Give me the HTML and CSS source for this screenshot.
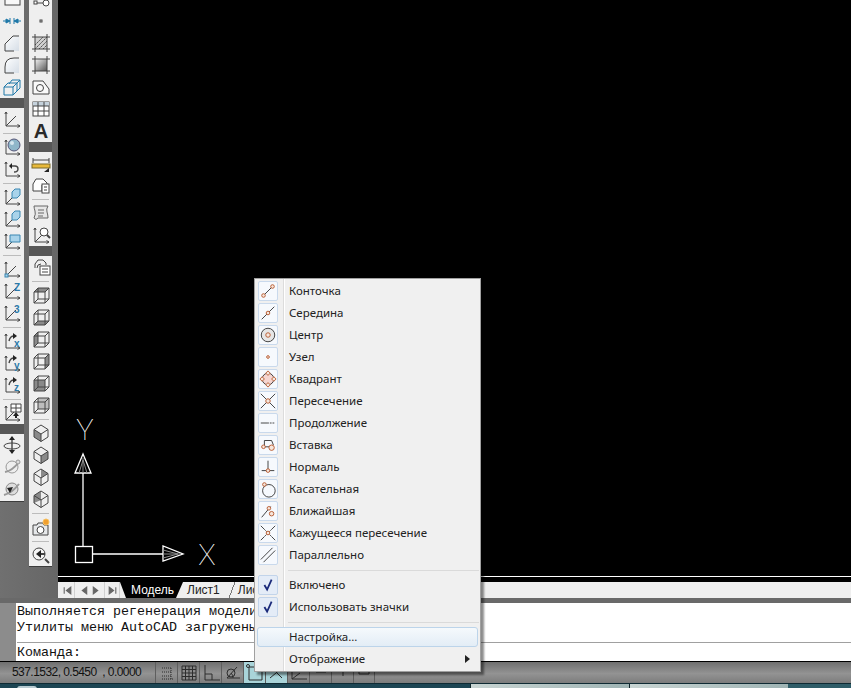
FILE: index.html
```html
<!DOCTYPE html>
<html lang="ru">

<head>
    <meta charset="UTF-8">
    <title>AutoCAD</title>
    <link rel="stylesheet" href="styles.css">
</head>

<body>
    <!-- shared icon parts -->
    <svg class="defs" width="0" height="0">
        <defs>
            <linearGradient id="grad" x1="0" y1="0" x2="1" y2="1">
                <stop offset="0" stop-color="#f4f4f4"/>
                <stop offset="1" stop-color="#555"/>
            </linearGradient>
            <linearGradient id="soft" x1="0" y1="0" x2="1" y2="1">
                <stop offset="0" stop-color="#fff"/>
                <stop offset="1" stop-color="#d5dde6"/>
            </linearGradient>
            <symbol id="ucs" viewBox="0 0 20 20">
                <path d="M4 3V17H18M4 17L14 7M15.500 15.500L18 17L15.500 18.500M2.800 5L4 3L5.200 5"/>
            </symbol>
            <symbol id="axes" viewBox="0 0 20 20">
                <path d="M4 3V17H18M15.500 15.500L18 17L15.500 18.500M2.800 5L4 3L5.200 5"/>
            </symbol>
            <symbol id="cube" viewBox="0 0 20 20">
                <path d="M3 7H14V18H3ZM3 7L7 3H18V14L14 18M14 7L18 3M7 3V14H18M7 14L3 18"/>
            </symbol>
            <symbol id="iso" viewBox="0 0 20 20">
                <path d="M10 2L17 6.500V14L10 18.500L3 14V6.500ZM3 6.500L10 11L17 6.500M10 11V18.500"/>
            </symbol>
        </defs>
    </svg>

    <div class="workspace">
        <div class="toolbars">
            <div class="tb tb-left">
                <div class="tool top"><svg class="ico" viewBox="0 0 20 20"><rect x="3" y="5" width="15" height="10" fill="#f8f8f8"/></svg></div>
                <div class="tool"><svg class="ico blue" viewBox="0 0 20 20"><path d="M1 10H7M13 10H19M8 7V13M12 7V13"/><path class="solid-blue" d="M4 8L8 10L4 12ZM16 8L12 10L16 12Z"/></svg></div>
                <div class="tool"><svg class="ico" viewBox="0 0 20 20"><path fill="url(#soft)" d="M17 3H11L3 11V18H17Z" stroke="none"/><path d="M17 3H11L3 11V18H12"/></svg></div>
                <div class="tool"><svg class="ico" viewBox="0 0 20 20"><path fill="url(#soft)" d="M17 3H12Q3 3 3 12V18H17Z" stroke="none"/><path d="M17 3H12Q3 3 3 12V18H12"/></svg></div>
                <div class="tool"><svg class="ico blue" viewBox="0 0 20 20"><path d="M2 10H11V18H2ZM2 10L6 6H15V14L11 18M11 10L15 6M7 7L10 3H18V11L15 14M15 6L18 3"/></svg></div>
                <div class="grip"></div>
                <div class="tool"><svg class="ico"><use href="#ucs"/></svg></div>
                <div class="sep"></div>
                <div class="tool"><svg class="ico" viewBox="0 0 20 20"><use href="#axes" width="20" height="20"/><circle cx="12" cy="8" r="6" fill="#8fb6c9" stroke="#557"/><circle cx="10" cy="6" r="2" fill="#d6e6ee" stroke="none"/></svg></div>
                <div class="tool"><svg class="ico" viewBox="0 0 20 20"><use href="#axes" width="20" height="20"/><path class="mid" d="M9 7H13Q16 7 16 10T12 13"/><path class="solid" d="M10 4V10L7 7Z"/></svg></div>
                <div class="sep"></div>
                <div class="tool"><svg class="ico" viewBox="0 0 20 20"><use href="#ucs" width="20" height="20"/><path class="face" d="M10 5L13 2H18V8L15 11H10Z"/></svg></div>
                <div class="tool"><svg class="ico" viewBox="0 0 20 20"><use href="#ucs" width="20" height="20"/><path class="face" d="M10 5L13 2H18V8L15 11H10Z"/></svg></div>
                <div class="tool"><svg class="ico" viewBox="0 0 20 20"><use href="#ucs" width="20" height="20"/><path class="face" d="M8 4H18V11H8Z"/></svg></div>
                <div class="sep"></div>
                <div class="tool"><svg class="ico" viewBox="0 0 20 20"><use href="#ucs" width="20" height="20"/><rect x="3" y="15" width="3" height="3" class="face"/></svg></div>
                <div class="tool"><svg class="ico" viewBox="0 0 20 20"><use href="#ucs" width="20" height="20"/><text x="12" y="10" class="letter">Z</text></svg></div>
                <div class="tool"><svg class="ico" viewBox="0 0 20 20"><use href="#ucs" width="20" height="20"/><text x="12" y="10" class="letter">3</text></svg></div>
                <div class="sep"></div>
                <div class="tool"><svg class="ico" viewBox="0 0 20 20"><use href="#axes" width="20" height="20"/><path class="mid" d="M7 10Q8 5 12 5"/><path class="solid" d="M11 2L15 5L11 8Z"/><text x="12" y="16" class="letter">x</text></svg></div>
                <div class="tool"><svg class="ico" viewBox="0 0 20 20"><use href="#axes" width="20" height="20"/><path class="mid" d="M7 10Q8 5 12 5"/><path class="solid" d="M11 2L15 5L11 8Z"/><text x="12" y="16" class="letter">y</text></svg></div>
                <div class="tool"><svg class="ico" viewBox="0 0 20 20"><use href="#axes" width="20" height="20"/><path class="mid" d="M7 10Q8 5 12 5"/><path class="solid" d="M11 2L15 5L11 8Z"/><text x="12" y="16" class="letter">z</text></svg></div>
                <div class="sep"></div>
                <div class="tool"><svg class="ico" viewBox="0 0 20 20"><use href="#ucs" width="20" height="20"/><path fill="#fff" d="M9 1H19V9H9ZM14 1V9M9 5H19"/><path class="solid" d="M11 13L14 9L17 13H15V15H13V13Z"/></svg></div>
                <div class="grip"></div>
                <div class="tool"><svg class="ico" viewBox="0 0 20 20"><path class="mid" d="M10 2V18"/><path class="solid" d="M10 1L13 5H7ZM10 19L7 15H13Z"/><ellipse cx="10" cy="11" rx="8" ry="3"/></svg></div>
                <div class="tool"><svg class="ico" viewBox="0 0 20 20"><circle cx="10" cy="10" r="6" fill="#eee" stroke="#999"/><path class="ring" d="M3 15Q10 14 17 5"/><circle cx="16" cy="5" r="2" fill="#ddd" stroke="#999"/></svg></div>
                <div class="tool"><svg class="ico" viewBox="0 0 20 20"><circle cx="10" cy="10" r="6" fill="#ddd" stroke="#888"/><path class="ring" d="M2 16Q10 14 17 5"/><path class="solid" d="M5 9L11 8L8 14Z"/></svg></div>
            </div>

            <div class="tb tb-right">
                <div class="tool top"><svg class="ico" viewBox="0 0 20 20"><rect x="3" y="11" width="3" height="3" fill="#fff"/><path d="M6 13H12"/><circle cx="15" cy="13" r="3" fill="#fff"/></svg></div>
                <div class="tool"><svg class="ico" viewBox="0 0 20 20"><rect x="9" y="9" width="2" height="2"/></svg></div>
                <div class="tool"><svg class="ico" viewBox="0 0 20 20"><rect x="4" y="4" width="12" height="12" fill="#cfcfcf" stroke="none"/><path class="dash" d="M4 12L12 4M4 16L16 4M8 16L16 8M12 16L16 12"/><path d="M1 4H19M1 16H19M4 1V19M16 1V19"/></svg></div>
                <div class="tool"><svg class="ico" viewBox="0 0 20 20"><rect x="4" y="4" width="12" height="12" fill="url(#grad)" stroke="none"/><path d="M1 4H19M1 16H19M4 1V19M16 1V19"/></svg></div>
                <div class="tool"><svg class="ico" viewBox="0 0 20 20"><path fill="#fafafa" d="M2 4H12L18 12V17H2Z"/><circle cx="9" cy="11" r="3.500"/></svg></div>
                <div class="tool"><svg class="ico" viewBox="0 0 20 20"><rect x="2" y="3" width="16" height="14" fill="#fff"/><rect x="2" y="3" width="16" height="4" fill="#c5d2dc" stroke="none"/><path d="M2 7H18M2 12H18M7 3V17M13 3V17"/></svg></div>
                <div class="tool"><svg class="ico" viewBox="0 0 20 20"><text x="10" y="17" class="big-a">A</text></svg></div>
                <div class="grip"></div>
                <div class="tool"><svg class="ico" viewBox="0 0 20 20"><path d="M2 5V10M18 5V10M2 7H18"/><rect x="1" y="11" width="18" height="4" fill="#e8b93a" stroke="#7a6a2a"/><path class="solid" d="M13 19L18 15V19Z"/></svg></div>
                <div class="tool"><svg class="ico" viewBox="0 0 20 20"><path fill="#fff" d="M2 9L5 4H12L16 8V10H11V16H2Z"/><rect x="11" y="9" width="7" height="9" fill="#fff"/><path d="M13 12H16M13 15H16"/></svg></div>
                <div class="sep"></div>
                <div class="tool"><svg class="ico gray" viewBox="0 0 20 20"><path fill="#e6e6e6" d="M3 3H17Q15 6 16 9T17 15H7Q5 18 3 15Q5 11 4 8T3 3Z"/><path d="M7 7H13M7 10H13M7 13H12"/></svg></div>
                <div class="tool"><svg class="ico" viewBox="0 0 20 20"><use href="#ucs" width="20" height="20"/><circle cx="13" cy="7" r="4" fill="#fff"/><path class="thick" d="M16 10L19 13"/></svg></div>
                <div class="grip"></div>
                <div class="tool"><svg class="ico" viewBox="0 0 20 20"><path d="M4 11V7L7 3H12L15 6V8"/><path d="M6 11Q6 7 10 7"/><rect x="9" y="9" width="10" height="9" fill="#fff"/><path d="M11 12H17M11 15H17"/></svg></div>
                <div class="sep"></div>
                <div class="tool"><svg class="ico" viewBox="0 0 20 20"><path class="fill-face" d="M3 7L7 3H18L14 7Z"/><use href="#cube" width="20" height="20"/></svg></div>
                <div class="tool"><svg class="ico" viewBox="0 0 20 20"><path class="fill-face" d="M3 18L7 14H18L14 18Z"/><use href="#cube" width="20" height="20"/></svg></div>
                <div class="tool"><svg class="ico" viewBox="0 0 20 20"><path class="fill-face" d="M3 7L7 3V14L3 18Z"/><use href="#cube" width="20" height="20"/></svg></div>
                <div class="tool"><svg class="ico" viewBox="0 0 20 20"><path class="fill-face" d="M14 7L18 3V14L14 18Z"/><use href="#cube" width="20" height="20"/></svg></div>
                <div class="tool"><svg class="ico" viewBox="0 0 20 20"><rect class="fill-face" x="3" y="7" width="11" height="11"/><use href="#cube" width="20" height="20"/></svg></div>
                <div class="tool"><svg class="ico" viewBox="0 0 20 20"><rect class="fill-back" x="7" y="3" width="11" height="11"/><use href="#cube" width="20" height="20"/></svg></div>
                <div class="sep"></div>
                <div class="tool"><svg class="ico" viewBox="0 0 20 20"><path class="fill-face" d="M3 6.500L10 11V18.500L3 14Z"/><use href="#iso" width="20" height="20"/></svg></div>
                <div class="tool"><svg class="ico" viewBox="0 0 20 20"><path class="fill-face" d="M17 6.500L10 11V18.500L17 14Z"/><use href="#iso" width="20" height="20"/></svg></div>
                <div class="tool"><svg class="ico" viewBox="0 0 20 20"><path class="fill-face" d="M17 6.500L10 2V11Z"/><use href="#iso" width="20" height="20"/></svg></div>
                <div class="tool"><svg class="ico" viewBox="0 0 20 20"><path class="fill-face" d="M3 6.500L10 2V11L3 14Z"/><use href="#iso" width="20" height="20"/></svg></div>
                <div class="sep"></div>
                <div class="tool"><svg class="ico" viewBox="0 0 20 20"><path fill="#e6e8ea" d="M2 8H6L7 6H12L13 8H17V18H2Z"/><circle cx="9.500" cy="13" r="3.500" fill="#fff"/><circle cx="15" cy="5" r="3" fill="#f0a030" stroke="#f7c060"/></svg></div>
                <div class="sep"></div>
                <div class="tool"><svg class="ico" viewBox="0 0 20 20"><circle cx="8" cy="9" r="6" fill="#f4f4f4"/><path class="thick" d="M14 14L18 18M7 9H14"/><path class="solid" d="M10 5V13L5 9Z"/></svg></div>
            </div>
        </div>

        <div class="drawing">
            <div class="canvas">
                <svg class="ucs-icon" width="170" height="175" viewBox="0 0 170 175">
                    <path d="M23 73V146M32 154H103"/>
                    <rect x="15.500" y="146.500" width="17" height="16"/>
                    <path d="M23 54L15 73H31Z"/>
                    <path class="inner" d="M23 58V73M19 73L23 60L27 73"/>
                    <path d="M103 146V161L123 154Z"/>
                    <path class="inner" d="M103 154H120M103 150L118 154L103 158"/>
                    <text x="25" y="40" class="axis">Y</text>
                    <text x="147" y="165" class="axis">X</text>
                </svg>
            </div>
            <div class="canvas-foot"></div>
            <div class="tabs">
                <div class="tab-nav">
                    <span class="nav"><svg viewBox="0 0 10 10"><path d="M2 2V8M8 2V8L4 5Z"/></svg></span>
                    <span class="nav nav-prev"><svg viewBox="0 0 10 10"><path d="M7 2V8L3 5Z"/></svg></span>
                    <span class="nav nav-next"><svg viewBox="0 0 10 10"><path d="M3 2V8L7 5Z"/></svg></span>
                    <span class="nav"><svg viewBox="0 0 10 10"><path d="M8 2V8M2 2V8L6 5Z"/></svg></span>
                </div>
                <span class="tab active">Модель</span>
                <span class="tab sheet">Лист1</span>
                <span class="tab last">Лист2</span>
            </div>
        </div>
    </div>

    <div class="divider"></div>

    <div class="command">
        <div class="command-grip"></div>
        <div class="command-body">
            <div class="history">
                <div>Выполняется регенерация модели.</div>
                <div>Утилиты меню AutoCAD загружены.</div>
            </div>
            <div class="prompt">Команда:</div>
        </div>
    </div>

    <div class="status">
        <div class="coords">537.1532, 0.5450  , 0.0000</div>
        <div class="toggles">
            <span class="toggle"><svg viewBox="0 0 20 20"><path class="dots" d="M5 5H14M5 9H14M5 13H14M14 5V16M5 16H16"/></svg></span>
            <span class="toggle"><svg viewBox="0 0 20 20"><path d="M3 3H17V17H3ZM3 6.500H17M3 10H17M3 13.500H17M6.500 3V17M10 3V17M13.500 3V17"/></svg></span>
            <span class="toggle"><svg viewBox="0 0 20 20"><path d="M4 2V17H19M4 11H11V17"/></svg></span>
            <span class="toggle"><svg viewBox="0 0 20 20"><path d="M4 15H17M4 15L14 4M10 15A6 6 0 0 0 8 10"/><circle cx="8" cy="10" r="4"/></svg></span>
            <span class="toggle on"><svg viewBox="0 0 20 20"><path d="M4 4H17V17H4Z"/><circle cx="3" cy="3" r="1.500"/></svg></span>
            <span class="toggle on"><svg viewBox="0 0 20 20"><path d="M3 15L15 5M5 5L15 15"/></svg></span>
            <span class="toggle"><svg viewBox="0 0 20 20"><path d="M3 6V16H18M3 16L11 10"/></svg></span>
            <span class="toggle"><svg viewBox="0 0 20 20"><path d="M5 5H15V9H5Z"/></svg></span>
            <span class="toggle"><svg viewBox="0 0 20 20"><path d="M10 2V13"/></svg></span>
            <span class="toggle"><svg viewBox="0 0 20 20"><path d="M5 3H15V11H5ZM8 7H12"/></svg></span>
        </div>
    </div>

    <div class="taskbar">
        <span class="orb"></span>
        <span class="task-btn first"></span>
        <span class="task-btn"></span>
    </div>

    <div class="menu">
        <div class="item"><span class="mark"><svg class="osnap" viewBox="0 0 20 20"><path d="M5 15L15 5"/><circle class="pt" cx="15" cy="5" r="2"/><circle class="pt" cx="5" cy="15" r="2"/></svg></span><span class="label">Конточка</span></div>
        <div class="item"><span class="mark"><svg class="osnap" viewBox="0 0 20 20"><path d="M3 17L17 3"/><circle class="pt" cx="10" cy="10" r="2"/></svg></span><span class="label">Середина</span></div>
        <div class="item"><span class="mark"><svg class="osnap" viewBox="0 0 20 20"><circle cx="10" cy="10" r="7.500" fill="#e6e6e6"/><circle class="pt" cx="10" cy="10" r="2.500"/></svg></span><span class="label">Центр</span></div>
        <div class="item"><span class="mark"><svg class="osnap" viewBox="0 0 20 20"><circle class="pt" cx="10" cy="10" r="1.500"/></svg></span><span class="label">Узел</span></div>
        <div class="item"><span class="mark"><svg class="osnap" viewBox="0 0 20 20"><circle cx="10" cy="10" r="6.500" fill="#f5d5d0"/><path class="pt" d="M10 1L12.500 3.500L10 6L7.500 3.500ZM10 14L12.500 16.500L10 19L7.500 16.500ZM3.500 7.500L6 10L3.500 12.500L1 10ZM16.500 7.500L19 10L16.500 12.500L14 10Z"/></svg></span><span class="label">Квадрант</span></div>
        <div class="item"><span class="mark"><svg class="osnap" viewBox="0 0 20 20"><path d="M2 2L18 18M18 2L2 18"/><circle class="pt" cx="10" cy="10" r="2.500"/></svg></span><span class="label">Пересечение</span></div>
        <div class="item"><span class="mark"><svg class="osnap" viewBox="0 0 20 20"><path d="M2 10H9"/><path class="dash" d="M9 10H18"/></svg></span><span class="label">Продолжение</span></div>
        <div class="item"><span class="mark"><svg class="osnap" viewBox="0 0 20 20"><path d="M6 11V5H14L16 10M3 12H12"/><circle class="pt" cx="5" cy="12" r="2"/><circle class="pt" cx="14" cy="13" r="3"/></svg></span><span class="label">Вставка</span></div>
        <div class="item"><span class="mark"><svg class="osnap" viewBox="0 0 20 20"><path d="M10 3V14M3 14H17"/><circle class="pt" cx="10" cy="14" r="2"/></svg></span><span class="label">Нормаль</span></div>
        <div class="item"><span class="mark"><svg class="osnap" viewBox="0 0 20 20"><circle cx="11" cy="12" r="7"/><circle class="pt" cx="6" cy="5" r="2"/></svg></span><span class="label">Касательная</span></div>
        <div class="item"><span class="mark"><svg class="osnap" viewBox="0 0 20 20"><path d="M3 17L13 5"/><circle class="pt" cx="11" cy="7" r="2"/><circle class="pt" cx="14" cy="13" r="2.500"/></svg></span><span class="label">Ближайшая</span></div>
        <div class="item"><span class="mark"><svg class="osnap" viewBox="0 0 20 20"><path d="M2 2L6 6M14 14L18 18M18 2L14 6M6 14L2 18"/><path class="dash" d="M6 6L14 14M14 6L6 14"/><circle class="pt" cx="10" cy="10" r="2"/></svg></span><span class="label">Кажущееся пересечение</span></div>
        <div class="item"><span class="mark"><svg class="osnap" viewBox="0 0 20 20"><path d="M2 15L15 2M5 18L18 5"/></svg></span><span class="label">Параллельно</span></div>
        <div class="menu-sep"></div>
        <div class="item"><span class="mark checked"><svg class="check" viewBox="0 0 20 20"><path d="M6 10L9 15L14 4"/></svg></span><span class="label">Включено</span></div>
        <div class="item"><span class="mark checked"><svg class="check" viewBox="0 0 20 20"><path d="M6 10L9 15L14 4"/></svg></span><span class="label">Использовать значки</span></div>
        <div class="menu-sep"></div>
        <div class="item hover"><span class="mark plain"></span><span class="label">Настройка...</span></div>
        <div class="item"><span class="mark plain"></span><span class="label">Отображение</span><span class="arrow"></span></div>
    </div>
</body>

</html>
```

FILE: styles.css
```css
html,
body {
    margin: 0;
    padding: 0;
    width: 851px;
    height: 688px;
    overflow: hidden;
    background-color: #6a6a6a;
}

body {
    position: relative;
    font-family: 'Liberation Sans', Arial, sans-serif;
}

.defs {
    display: block;
    height: 0;
}

.workspace {
    display: flex;
    height: 598px;
}

/* left toolbars */
.toolbars {
    display: flex;
    align-items: flex-start;
    width: 58px;
    flex-shrink: 0;
    background: linear-gradient(to right, #707070, #666666);
}

.tb {
    background-color: #efefef;
    box-shadow: 0 1px 0 #3c3c3c;
}

.tb-left {
    width: 24px;
    margin-right: 5px;
    height: 501px;
}

.tb-right {
    width: 23px;
    height: 566px;
}

.tool {
    height: 22px;
    display: flex;
    align-items: center;
    justify-content: center;
}

.tool.top {
    height: 10px;
    align-items: flex-end;
    overflow: hidden;
}

.ico {
    width: 20px;
    height: 20px;
    flex-shrink: 0;
    fill: none;
    stroke: #444444;
    stroke-width: 1;
}

.ico.blue {
    stroke: #1f78a8;
}

.ico.gray {
    stroke: #666666;
}

.solid-blue {
    fill: #1f78a8;
}

.solid {
    fill: #222222;
    stroke: none;
}

.thick {
    stroke-width: 2;
}

.mid {
    stroke-width: 1.4;
}

.ring {
    stroke: #999999;
    stroke-width: 2;
}

.dash {
    stroke-dasharray: 2 1;
}

.face {
    fill: #a9d3ea;
    stroke: #3b87b2;
}

.fill-face {
    fill: #8a8a8a;
    stroke: none;
}

.fill-back {
    fill: #bdbdbd;
    stroke: none;
}

.letter {
    font-family: 'Liberation Sans', sans-serif;
    font-size: 10px;
    font-weight: bold;
    fill: #2b78a8;
    stroke: none;
}

.big-a {
    font-family: 'Liberation Sans', sans-serif;
    font-size: 20px;
    font-weight: bold;
    text-anchor: middle;
    fill: #2a2a2a;
    stroke: none;
}

.grip {
    height: 10px;
    background-color: #575757;
    display: flex;
    align-items: center;
    justify-content: center;
}

.grip::after {
    content: "";
    width: 14px;
    height: 4px;
    background-image: radial-gradient(#c8c8c8 40%, transparent 45%);
    background-size: 2px 2px;
}

.sep {
    height: 6px;
    display: flex;
    align-items: center;
    padding: 0 3px;
}

.sep::after {
    content: "";
    flex: 1;
    height: 1px;
    background-color: #bcbcbc;
}

/* drawing area */
.drawing {
    flex: 1;
    display: flex;
    flex-direction: column;
}

.canvas {
    position: relative;
    height: 576px;
    background-color: #000;
    border-bottom: 1px solid #fff;
}

.ucs-icon {
    position: absolute;
    left: 2px;
    top: 400px;
    fill: none;
    stroke: #fff;
    stroke-width: 1.3;
}

.ucs-icon .inner {
    stroke: #8c8c8c;
    stroke-width: 1;
}

.ucs-icon .axis {
    font-family: Roboto, 'Liberation Sans', sans-serif;
    font-size: 29px;
    font-weight: 100;
    text-anchor: middle;
    fill: #fff;
    stroke: none;
}

.canvas-foot {
    height: 5px;
    background-color: #000;
}

.tabs {
    height: 16px;
    display: flex;
    align-items: stretch;
    background-color: #efefef;
    font-size: 12px;
    color: #222;
}

.tab-nav {
    display: flex;
    margin-left: 2px;
}

.nav {
    width: 15px;
    display: flex;
    align-items: center;
    justify-content: center;
    border-right: 1px solid #d0d0d0;
    box-sizing: border-box;
}

.nav-prev {
    justify-content: flex-end;
    border-right: none;
}

.nav-next {
    justify-content: flex-start;
}

.nav svg {
    width: 11px;
    height: 11px;
    fill: #666;
    stroke: #666;
}

.tab {
    display: flex;
    align-items: center;
    position: relative;
}

.tab.active {
    width: 63px;
    box-sizing: border-box;
    padding-left: 11px;
    background-color: #000;
    color: #fff;
    clip-path: polygon(0 0, 100% 0, calc(100% - 7px) 100%, 6px 100%);
}

.tab.sheet {
    padding: 0 15px 0 4px;
}

/* slanted divider between sheet tabs */
.tab.sheet::after {
    content: "";
    position: absolute;
    right: 0;
    top: 0;
    bottom: 0;
    width: 6px;
    background: linear-gradient(to bottom right, transparent 46%, #777 46%, #777 54%, transparent 54%);
}

.tab.last {
    padding-left: 3px;
}

/* command line */
.divider {
    height: 5px;
    background-color: #696969;
}

.command {
    display: flex;
    height: 58px;
    border-bottom: 1px solid #000;
    background-color: #fff;
}

.command-grip {
    width: 16px;
    background-color: #8c8c8c;
    background-image: radial-gradient(#eee 40%, transparent 45%);
    background-size: 2px 2px;
    background-repeat: repeat-x;
    background-position: 2px 3px;
}

.command-body {
    flex: 1;
    font-family: 'Liberation Mono', monospace;
    font-size: 13.33px;
    color: #111;
    padding-left: 1px;
}

.history {
    height: 38px;
    padding-top: 1px;
    line-height: 16px;
    border-bottom: 1px solid #a0a0a0;
}

.prompt {
    padding-top: 1px;
    line-height: 17px;
}

/* status bar */
.status {
    display: flex;
    height: 21px;
    background: linear-gradient(#6f6f6f, #939393 55%, #7c7c7c);
    border-bottom: 1px solid #0e2a33;
}

.coords {
    width: 155px;
    padding-left: 12px;
    box-sizing: border-box;
    font-size: 12px;
    letter-spacing: -0.55px;
    line-height: 21px;
    white-space: pre;
    color: #111;
}

.toggles {
    display: flex;
}

.toggle {
    width: 22px;
    display: flex;
    align-items: center;
    justify-content: center;
    border-left: 1px solid #5e5e5e;
    box-sizing: border-box;
}

.toggle:last-child {
    border-right: 1px solid #5e5e5e;
}

.toggle.on {
    background-color: #a9d4d9;
}

.toggle svg {
    width: 20px;
    height: 20px;
    fill: none;
    stroke: #2c2c2c;
}

.toggle .dots {
    stroke-dasharray: 1 1;
}

/* windows taskbar strip */
.taskbar {
    display: flex;
    height: 5px;
    background: linear-gradient(to right, #1c4553, #1c4553 788px, #2f5d68 788px);
}

.orb {
    width: 20px;
    margin-left: 17px;
    margin-top: 2px;
    background-color: #b9ccd2;
    border-radius: 10px 10px 0 0;
}

.task-btn {
    width: 158px;
    background: linear-gradient(to right, #c8d4d2, #9fb4b4);
    border-left: 1px solid #10262c;
}

.task-btn.first {
    margin-left: 433px;
}

/* osnap context menu */
.menu {
    position: absolute;
    z-index: 1;
    left: 254px;
    top: 278px;
    width: 227px;
    box-sizing: border-box;
    padding: 1px 1px 1px 3px;
    border: 1px solid #a0a0a0;
    background-color: #f0f0f0;
    background-image: linear-gradient(to right, transparent 28px, #dcdcdc 28px, #dcdcdc 29px, #fff 29px, #fff 30px, transparent 30px);
    box-shadow: 3px 3px 2px rgba(0, 0, 0, 0.45);
    font-family: 'Noto Sans', 'Liberation Sans', sans-serif;
    font-size: 11.5px;
    color: #222;
}

.item {
    display: flex;
    align-items: center;
    height: 22px;
    position: relative;
}

.label {
    margin-bottom: 2px;
}

.mark {
    width: 20px;
    height: 20px;
    margin-right: 11px;
    box-sizing: border-box;
    border: 1px solid #c9d9ec;
    border-radius: 2px;
    background-color: #f6f9fd;
    display: flex;
    align-items: center;
    justify-content: center;
    flex-shrink: 0;
}

.mark.plain {
    border-color: transparent;
    background: none;
}

.mark.checked {
    background-color: #e4ecf7;
    border-color: #c2d4ea;
}

.osnap {
    width: 18px;
    height: 18px;
    fill: none;
    stroke: #333;
    stroke-width: 1;
}

.osnap .pt {
    fill: #f6e6dc;
    stroke: #b5562a;
}

.check {
    width: 18px;
    height: 18px;
    fill: none;
    stroke: #1b2a7a;
    stroke-width: 2;
}

.menu-sep {
    height: 8px;
    display: flex;
    align-items: center;
    padding-left: 30px;
}

.menu-sep::after {
    content: "";
    flex: 1;
    height: 1px;
    background-color: #dadada;
}

.item.hover::before {
    content: "";
    position: absolute;
    left: -1px;
    right: 1px;
    top: 1px;
    bottom: 1px;
    border: 1px solid #bcd4ea;
    border-radius: 3px;
    background: linear-gradient(#f5f9fc, #e3edf6);
    z-index: -1;
}

.arrow {
    position: absolute;
    right: 9px;
    top: 7px;
    border-left: 5px solid #222;
    border-top: 4px solid transparent;
    border-bottom: 4px solid transparent;
}
```
